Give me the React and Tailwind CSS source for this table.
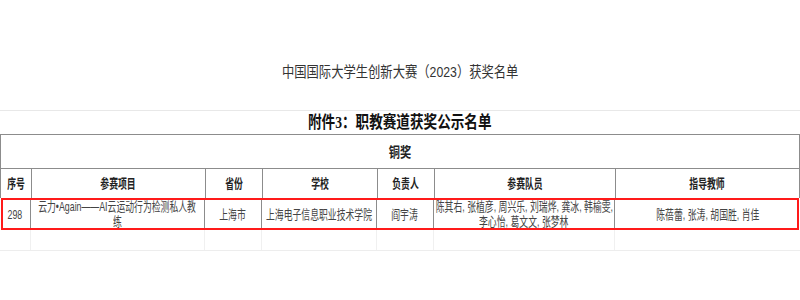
const CJK = { fontFamily: '"Liberation Sans", "Noto Sans CJK SC", sans-serif' };
const SERIF = { fontFamily: '"Liberation Serif", "Noto Sans CJK SC", serif' };

const cols = "grid grid-cols-[31px_174px_57px_115px_57px_181px_1fr]";

// squeezed text, like the original sheet export
const Squeeze = ({ children, className = "" }) => (
  <span className={`inline-block whitespace-nowrap scale-x-[0.68] ${className}`}>{children}</span>
);

const headers = ["序号", "参赛项目", "省份", "学校", "负责人", "参赛队员", "指导教师"];

const App = () => {
  return (
    <div className="w-[800px] h-[300px] bg-white overflow-hidden" style={CJK}>
      {/* page title */}
      <div className="h-[110px] flex justify-center pt-[62px]">
        <span className="inline-block whitespace-nowrap text-[15px] leading-5 text-[#333] scale-x-[0.82]">
          中国国际大学生创新大赛（2023）获奖名单
        </span>
      </div>

      <div className="border-t border-[#e8e8e8]">
        {/* sheet title */}
        <div className="h-[24px] flex items-center justify-center border-b border-[#8c8c8c]">
          <span className="inline-block whitespace-nowrap text-[17px] font-bold text-[#111] scale-x-[0.8]" style={SERIF}>
            附件3：职教赛道获奖公示名单
          </span>
        </div>

        {/* award level */}
        <div className="h-[34px] flex items-center justify-center border-x border-b border-[#8c8c8c] w-[800px]">
          <span className="inline-block text-[14px] font-bold text-[#222] scale-x-[0.8] pt-[1px]">铜奖</span>
        </div>

        {/* header row */}
        <div className={`${cols} h-[29px] border-x border-[#8c8c8c]`}>
          {headers.map((h, i) => (
            <div
              key={h}
              className={`flex items-center justify-center text-[13px] font-bold text-[#222] ${i < 6 ? "border-r border-[#8c8c8c]" : ""}`}
            >
              <Squeeze>{h}</Squeeze>
            </div>
          ))}
        </div>

        {/* data row */}
        <div className="relative">
          <div className={`${cols} h-[32px] text-[13px] text-[#444] leading-[15px]`}>
            <div className="flex items-center justify-center border-r border-[#8c8c8c]">
              <Squeeze>298</Squeeze>
            </div>
            <div className="flex flex-col items-center justify-center border-r border-[#8c8c8c]">
              <Squeeze>云力•Again——AI云运动行为检测私人教</Squeeze>
              <Squeeze>练</Squeeze>
            </div>
            <div className="flex items-center justify-center border-r border-[#8c8c8c]">
              <Squeeze>上海市</Squeeze>
            </div>
            <div className="flex items-center justify-center border-r border-[#8c8c8c]">
              <Squeeze>上海电子信息职业技术学院</Squeeze>
            </div>
            <div className="flex items-center justify-center border-r border-[#8c8c8c]">
              <Squeeze>阎宇涛</Squeeze>
            </div>
            <div className="flex flex-col items-center justify-center border-r border-[#8c8c8c]">
              <Squeeze>陈其右, 张植彦, 周兴乐, 刘瑞烨, 龚冰, 韩榆雯,</Squeeze>
              <Squeeze>李心怡, 葛文文, 张梦林</Squeeze>
            </div>
            <div className="flex items-center justify-center">
              <Squeeze>陈蓓蕾, 张涛, 胡国胜, 肖佳</Squeeze>
            </div>
          </div>
          <div className="absolute left-[1px] right-[1px] top-0 bottom-0 border-2 border-[#ff1a1a] pointer-events-none" />
        </div>

        {/* empty row */}
        <div className={`${cols} h-[21px] border-b border-[#ededed]`}>
          {headers.map((h, i) => (
            <div key={h} className={i < 6 ? "border-r border-[#f0f0f0]" : ""} />
          ))}
        </div>
      </div>
    </div>
  );
};

export default App;
